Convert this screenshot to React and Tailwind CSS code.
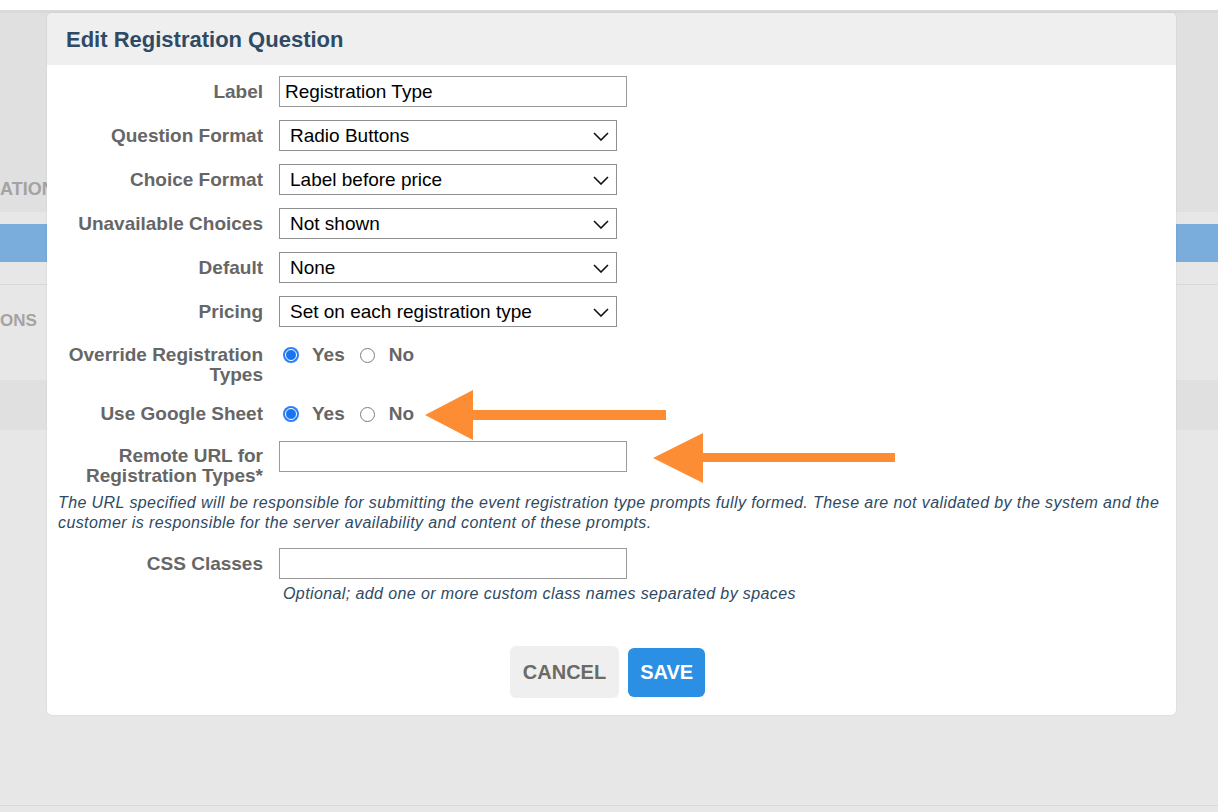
import React from "react";

const labelCls =
  "w-[216px] shrink-0 pl-2 text-right font-bold text-[19px] leading-[20px] text-[#666666]";

function Chevron() {
  return (
    <svg width="16" height="9" viewBox="0 0 16 9" className="shrink-0">
      <polyline points="1,1 8,8 15,1" fill="none" stroke="#111" strokeWidth="1.6" />
    </svg>
  );
}

function SelectBox({ value }) {
  return (
    <div className="w-[338px] h-[31px] border border-[#8f8f8f] bg-white flex items-center justify-between pl-[10px] pr-[7px] pt-px text-[19px] text-black">
      <span>{value}</span>
      <Chevron />
    </div>
  );
}

function TextBox({ value = "" }) {
  return (
    <div className="w-[348px] h-[31px] border border-[#9a9a9a] bg-white flex items-center pl-[5px] pt-px text-[19px] text-black">
      {value}
    </div>
  );
}

function Radio({ checked }) {
  if (checked) {
    return (
      <span className="w-4 h-4 rounded-full bg-[#2b80f5] flex items-center justify-center shrink-0">
        <span className="block w-[12px] h-[12px] rounded-full border-[1.5px] border-white bg-[#1a74f0]" />
      </span>
    );
  }
  return <span className="block w-[15px] h-[15px] rounded-full border border-[#7c7c7c] bg-white shrink-0" />;
}

function YesNo() {
  return (
    <div className="flex items-center h-[20px] text-[19px] font-bold text-[#666666]">
      <span className="ml-1">
        <Radio checked />
      </span>
      <span className="ml-[13px]">Yes</span>
      <span className="ml-[15px]">
        <Radio />
      </span>
      <span className="ml-[14px]">No</span>
    </div>
  );
}

function Row({ label, children, className = "" }) {
  return (
    <div className={"flex items-center h-[31px] " + className}>
      <div className={labelCls}>{label}</div>
      <div className="ml-4">{children}</div>
    </div>
  );
}

export default function App() {
  return (
    <div className="relative w-full h-[812px] overflow-hidden bg-[#e7e7e7] font-['Liberation_Sans',Arial,sans-serif]">
      {/* page behind the dialog */}
      <div className="h-[10px] bg-white" />
      <div className="h-[3px] bg-[#d9d9d9]" />
      <div className="h-[199px] bg-[#e0e0e0] flex items-end pb-[9px]">
        <span className="whitespace-nowrap font-bold text-[18px] text-[#a3a3a3]">ATION</span>
      </div>
      <div className="h-[12px] bg-[#e7e7e7]" />
      <div className="h-[38px] bg-[#7aaddb]" />
      <div className="h-[22px] bg-[#e7e7e7]" />
      <div className="h-px bg-[#d9d9d9]" />
      <div className="h-[95px] bg-[#e7e7e7] pt-[23px]">
        <span className="whitespace-nowrap font-bold text-[17px] text-[#a3a3a3]">ONS</span>
      </div>
      <div className="h-[50px] bg-[#e0e0e0]" />
      <div className="h-[375px] bg-[#e7e7e7]" />
      <div className="h-px bg-[#d9d9d9]" />

      {/* dialog */}
      <div className="absolute left-[47px] top-[13px] w-[1129px] rounded-[5px] bg-white shadow-[0_0_2px_rgba(0,0,0,0.12)] overflow-hidden">
        <div className="h-[52px] bg-[#efefef] flex items-center pl-[19px]">
          <h2 className="font-bold text-[22px] text-[#2e4a64]">Edit Registration Question</h2>
        </div>

        <div className="pt-[11px] pb-[17px]">
          <Row label="Label">
            <TextBox value="Registration Type" />
          </Row>
          <Row label="Question Format" className="mt-[13px]">
            <SelectBox value="Radio Buttons" />
          </Row>
          <Row label="Choice Format" className="mt-[13px]">
            <SelectBox value="Label before price" />
          </Row>
          <Row label="Unavailable Choices" className="mt-[13px]">
            <SelectBox value="Not shown" />
          </Row>
          <Row label="Default" className="mt-[13px]">
            <SelectBox value="None" />
          </Row>
          <Row label="Pricing" className="mt-[13px]">
            <SelectBox value="Set on each registration type" />
          </Row>

          <div className="flex items-start mt-[18px]">
            <div className={labelCls}>
              Override Registration
              <br />
              Types
            </div>
            <div className="ml-4">
              <YesNo />
            </div>
          </div>

          <div className="flex items-start mt-[19px]">
            <div className={labelCls}>Use Google Sheet</div>
            <div className="ml-4">
              <YesNo />
            </div>
          </div>

          <div className="flex items-start mt-[17px]">
            <div className={labelCls + " mt-[5px]"}>
              Remote URL for
              <br />
              Registration Types*
            </div>
            <div className="ml-4">
              <TextBox />
            </div>
          </div>

          <p className="mt-[7px] pl-[11px] italic text-[16px] tracking-[0.4px] leading-[20px] text-[#2e4a64] whitespace-nowrap">
            The URL specified will be responsible for submitting the event registration type prompts fully formed. These are not validated by the system and the
            <br />
            customer is responsible for the server availability and content of these prompts.
          </p>

          <Row label="CSS Classes" className="mt-[15px]">
            <TextBox />
          </Row>
          <p className="mt-[5px] ml-[236px] italic text-[16px] tracking-[0.4px] leading-[20px] text-[#2e4a64]">
            Optional; add one or more custom class names separated by spaces
          </p>

          <div className="mt-[42px] flex items-center justify-center gap-[9px] pr-[8px]">
            <button className="h-[52px] px-[13px] rounded-[6px] bg-[#efefef] font-bold text-[20px] text-[#6b6a64]">
              CANCEL
            </button>
            <button className="h-[49px] px-[12px] rounded-[6px] bg-[#2b8fe4] font-bold text-[20px] text-white">
              SAVE
            </button>
          </div>
        </div>
      </div>

      {/* callout arrows */}
      <svg className="absolute inset-0 pointer-events-none" width="1218" height="812" viewBox="0 0 1218 812">
        <polygon
          points="425,415 473,390 473,410 666,410 666,420 473,420 473,440"
          fill="#fd8d34"
        />
        <polygon
          points="653,458 703,433 703,453 895,453 895,462 703,462 703,483"
          fill="#fd8d34"
        />
      </svg>
    </div>
  );
}
